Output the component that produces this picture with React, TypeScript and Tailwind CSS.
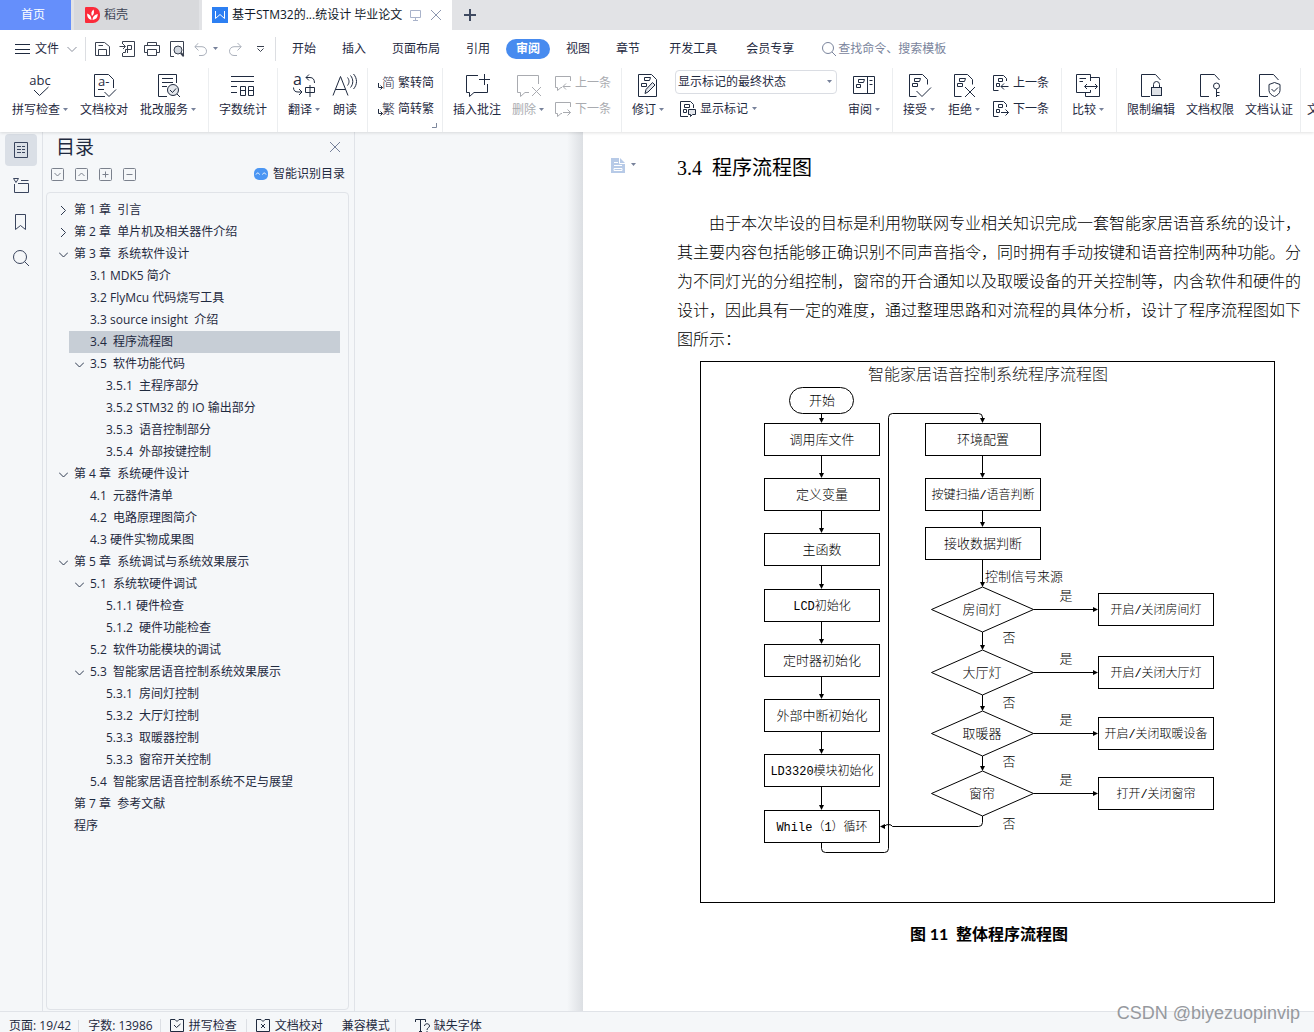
import React, { useState } from 'react';
import clsx from 'clsx';

interface TreeItem {
  label: string;
  level: 0 | 1 | 2;
  state?: 'open' | 'closed';
}

const tree: TreeItem[] = [
  { label: '第 1 章  引言', level: 0, state: 'closed' },
  { label: '第 2 章  单片机及相关器件介绍', level: 0, state: 'closed' },
  { label: '第 3 章  系统软件设计', level: 0, state: 'open' },
  { label: '3.1 MDK5 简介', level: 1 },
  { label: '3.2 FlyMcu 代码烧写工具', level: 1 },
  { label: '3.3 source insight  介绍', level: 1 },
  { label: '3.4  程序流程图', level: 1 },
  { label: '3.5  软件功能代码', level: 1, state: 'open' },
  { label: '3.5.1  主程序部分', level: 2 },
  { label: '3.5.2 STM32 的 IO 输出部分', level: 2 },
  { label: '3.5.3  语音控制部分', level: 2 },
  { label: '3.5.4  外部按键控制', level: 2 },
  { label: '第 4 章  系统硬件设计', level: 0, state: 'open' },
  { label: '4.1  元器件清单', level: 1 },
  { label: '4.2  电路原理图简介', level: 1 },
  { label: '4.3 硬件实物成果图', level: 1 },
  { label: '第 5 章  系统调试与系统效果展示', level: 0, state: 'open' },
  { label: '5.1  系统软硬件调试', level: 1, state: 'open' },
  { label: '5.1.1 硬件检查', level: 2 },
  { label: '5.1.2  硬件功能检查', level: 2 },
  { label: '5.2  软件功能模块的调试', level: 1 },
  { label: '5.3  智能家居语音控制系统效果展示', level: 1, state: 'open' },
  { label: '5.3.1  房间灯控制', level: 2 },
  { label: '5.3.2  大厅灯控制', level: 2 },
  { label: '5.3.3  取暖器控制', level: 2 },
  { label: '5.3.3  窗帘开关控制', level: 2 },
  { label: '5.4  智能家居语音控制系统不足与展望', level: 1 },
  { label: '第 7 章  参考文献', level: 0 },
  { label: '程序', level: 0 },
];

const levelMargin = ['ml-[6px]', 'ml-[22px]', 'ml-[38px]'];

/* ---------- small helpers ---------- */

const Caret = () => (
  <svg className="w-[5px] h-[3px] mb-[2px] shrink-0" viewBox="0 0 5 3">
    <path d="M0 0h5L2.5 3z" fill="#77819a" />
  </svg>
);

interface IconProps {
  children: React.ReactNode;
  className?: string;
}

// 24x26 ribbon icon, drawings may run a little over the sides
const Big = ({ children, className }: IconProps) => (
  <svg className={clsx('w-6 h-[26px] overflow-visible shrink-0', className)} viewBox="2 0 24 26" fill="none" stroke="currentColor">
    {children}
  </svg>
);

const Small = ({ children, className }: IconProps) => (
  <svg className={clsx('w-4 h-4 overflow-visible shrink-0', className)} viewBox="0 0 16 16" fill="none" stroke="currentColor">
    {children}
  </svg>
);

interface ButtonProps {
  label: string;
  icon: React.ReactNode;
  caret?: boolean;
  disabled?: boolean;
}

const BigButton = ({ label, icon, caret, disabled }: ButtonProps) => (
  <button disabled={disabled} className={clsx('flex flex-col items-center gap-1 shrink-0 whitespace-nowrap', disabled && 'text-[#a9abb0]')}>
    {icon}
    <span className="flex items-center gap-[3px] leading-4">
      {label}
      {caret && <Caret />}
    </span>
  </button>
);

const SmallButton = ({ label, icon, caret, disabled }: ButtonProps) => (
  <button disabled={disabled} className={clsx('flex items-center gap-1 h-[26px] shrink-0 whitespace-nowrap', disabled && 'text-[#a9abb0]')}>
    {icon}
    {label}
    {caret && <Caret />}
  </button>
);

const Group = ({ children, className }: IconProps) => (
  <div className={clsx('relative flex items-start shrink-0 pt-1 px-[10px] border-r border-[#eceef0]', className)}>{children}</div>
);

// two small buttons one over the other
const Stack = ({ children }: { children: React.ReactNode }) => <div className="flex flex-col -mt-[2px]">{children}</div>;

/* ---------- ribbon drawings ---------- */

const DocMarks = () => (
  <>
    <path d="M11.500 24.500H4.500V2.500H17.500L22.500 7.500V12.500" />
    <path d="M9.500 6.500h6l-1 3h-5zM7.500 11.500h5v3h-5z" />
  </>
);

const PlainDoc = () => <path d="M13 24.500H4.500V2.500H18.500L23.500 8" />;

const SmallDoc = () => (
  <>
    <path d="M5.500 15.500H.5V.5H10.500L13.500 3.500V6" />
    <path d="M5.500 3.500h4v3h-4zM3.500 8.500h3v3h-3z" />
  </>
);

const SmallBubble = () => <path d="M15.500 6V1.500H.5V12.500H2.500V15.500L6 12.500H7" />;

const ArrowLeft = () => <path d="M15.500 11.500H8M11 8.500L8 11.500 11 14.500" />;
const ArrowRight = () => <path d="M8 11.500H15.500M12.500 8.500L15.500 11.500 12.500 14.500" />;

const ConvertIcon = ({ char }: { char: string }) => (
  <Small>
    <text x="4" y="12" fill="currentColor" stroke="none" className="text-[13px] font-light">{char}</text>
    <path d="M.5 8V12.500H4.500M2.500 10.500L4.500 12.500 2.500 14.500" />
  </Small>
);

function TabStrip() {
  return (
    <div className="flex h-[30px] bg-[#e2e3e6] shrink-0">
      <button className="w-[71px] bg-[#658ffb] text-white pr-[5px] mr-[3px]">首页</button>
      <button className="flex items-center w-[125px] mr-[3px] pl-[11px] gap-1 bg-[#d8d9dc] text-[#3d4455]">
        <svg className="w-[15px] h-4" viewBox="0 0 15 16">
          <path d="M1 0h7a7 7 0 0 1 7 7v2a7 7 0 0 1-7 7H1a1 1 0 0 1-1-1V1a1 1 0 0 1 1-1z" fill="#fb2b3a" />
          <path d="M6.500 13C3 12 2 9.500 2.200 6.500 5 7.500 6.500 9.500 6.500 13zM7 9C5.800 6.500 6.300 4.500 8.500 2.500 9.500 5 9 7.500 7 9zM7.500 13C7.500 9.500 9.500 7.500 12.800 7 12.800 10.500 11 12.500 7.500 13z" fill="#fff" />
        </svg>
        稻壳
      </button>
      <div className="flex items-center w-[250px] bg-white pl-[10px] text-[#101828]">
        <svg className="w-4 h-4 mr-1" viewBox="0 0 16 16">
          <rect width="16" height="16" fill="#2d7ff2" />
          <path d="M3.500 4v7.500L8 7.500l4.500 4V4" stroke="#fff" fill="none" />
        </svg>
        <span className="flex-1 whitespace-nowrap">基于STM32的...统设计 毕业论文</span>
        <button aria-label="演示" className="mr-[10px]">
          <svg className="w-[11px] h-[11px]" viewBox="0 0 11 11" fill="none" stroke="#a9b3ca">
            <path d="M.5.5h10v7H.5zM5.500 8v2.500M3 10.500h5" />
          </svg>
        </button>
        <button aria-label="关闭标签" className="mr-[11px]">
          <svg className="w-[10px] h-[10px]" viewBox="0 0 10 10" fill="none" stroke="#8c97af">
            <path d="M0 0l10 10M10 0L0 10" />
          </svg>
        </button>
      </div>
      <button aria-label="新建标签" className="pl-3">
        <svg className="w-3 h-3" viewBox="0 0 12 12" stroke="#3f4a60" strokeWidth="2">
          <path d="M6 0v12M0 6h12" />
        </svg>
      </button>
    </div>
  );
}

function MenuBar() {
  const [tab, setTab] = useState('审阅');

  const renderTab = (name: string) => (
    <button
      key={name}
      onClick={() => setTab(name)}
      className={clsx('h-5 px-[10px] rounded-full whitespace-nowrap', tab === name && 'bg-[#478bef] text-white font-bold')}
    >
      {name}
    </button>
  );

  return (
    <div className="flex items-center h-[38px] shrink-0">
      <button className="flex items-center pl-[15px] pr-2">
        <svg className="w-[15px] h-[10px] mr-[5px]" viewBox="0 0 15 10" stroke="currentColor">
          <path d="M0 .5h15M0 5.500h15M0 9.500h15" />
        </svg>
        文件
        <svg className="w-[10px] h-[5px] ml-2" viewBox="0 0 10 5" fill="none" stroke="#8a8f9c">
          <path d="M.5 0L5 4.500 9.500 0" />
        </svg>
      </button>
      <div className="flex items-center h-6 border-x border-[#dcdee2] pl-2 w-[191px] text-[#39404f]">
        <button aria-label="保存" className="mr-[9px]">
          <Small>
            <path d="M1.500 1.500H10.500L15.500 5.500V14.500H1.500zM4.500 14.500V8.500H12.500V14.500M4.500 4.500H9" />
          </Small>
        </button>
        <button aria-label="输出为PDF" className="mr-[9px]">
          <Small>
            <path d="M3.500 3V.5H15.500V15.500H3.500V12M.5 5.500H6M4 3L6.500 5.500 4 8M8.500 12V4.500H12.500V8.500H6.500V11.500H4" />
          </Small>
        </button>
        <button aria-label="打印" className="mr-[9px]">
          <Small>
            <path d="M3.500 4.500V1.500H12.500V4.500M3.500 11.500H.5V4.500H15.500V11.500H12.500M3.500 8.500H12.500V14.500H3.500z" />
          </Small>
        </button>
        <button aria-label="打印预览" className="mr-[9px]">
          <Small>
            <path d="M5 15.500H1.500V.5H14.500V15.500" />
            <circle cx="9" cy="9" r="4" fill="#d3d8e0" />
            <path d="M12 12l2.500 3" strokeWidth="2" />
          </Small>
        </button>
        <button aria-label="撤销" className="mr-[6px] text-[#aab0bb]">
          <svg className="w-[13px] h-[13px]" viewBox="0 0 13 13" fill="none" stroke="currentColor">
            <path d="M4.500 0L.8 3.700 4.500 7.500M1 3.700H8C14 4 14 12.500 8 12.500H5" />
          </svg>
        </button>
        <Caret />
        <button aria-label="恢复" className="ml-[11px] mr-[14px] text-[#aab0bb]">
          <svg className="w-[13px] h-[13px]" viewBox="0 0 13 13" fill="none" stroke="currentColor">
            <path d="M8.500 0L12.200 3.700 8.500 7.500M12 3.700H5C-1 4-1 12.500 5 12.500H8" />
          </svg>
        </button>
        <button aria-label="自定义快速访问工具栏">
          <svg className="w-[9px] h-[7px]" viewBox="0 0 9 7" fill="none" stroke="currentColor">
            <path d="M1 .5h7M1.500 2.500L4.500 5.500 7.500 2.500" />
          </svg>
        </button>
      </div>
      <nav className="flex items-center gap-[6px] pl-[6px]">{['开始', '插入', '页面布局', '引用', '审阅', '视图', '章节'].map(renderTab)}</nav>
      <nav className="flex items-center gap-[9px] pl-[9px]">{['开发工具', '会员专享'].map(renderTab)}</nav>
      <label className="flex items-center pl-[18px] text-[#7a849c]">
        <svg className="w-[14px] h-[14px] mr-[2px] shrink-0" viewBox="0 0 14 14" fill="none" stroke="currentColor">
          <circle cx="6" cy="6" r="5.500" />
          <path d="M10 10l4 4" />
        </svg>
        <input type="text" placeholder="查找命令、搜索模板" className="w-[130px] outline-none placeholder:text-[#7a849c]" />
      </label>
    </div>
  );
}

function Ribbon() {
  return (
    <div className="flex h-16 shrink-0 overflow-hidden">
      <Group className="w-[209px] pl-3 gap-3">
        <BigButton
          caret
          label="拼写检查"
          icon={
            <Big>
              <text x="14" y="13" textAnchor="middle" fill="currentColor" stroke="none" className="text-[13px]">abc</text>
              <path d="M8 18l5.500 5.500L22.500 15" />
            </Big>
          }
        />
        <BigButton
          label="文档校对"
          icon={
            <Big>
              <path d="M15 24.500H4.500V2.500H18.500L23.500 7.500V16M8 17.500H14M14.500 20L19 24.500 26 17.500" />
              <text x="8" y="14" fill="currentColor" stroke="none" className="text-[13px]">a-</text>
            </Big>
          }
        />
        <BigButton
          caret
          label="批改服务"
          icon={
            <Big>
              <path d="M13 24.500H4.500V2.500H22.500V11M8 6.500H19M8 10.500H19M8 14.500H13" />
              <circle cx="19" cy="18" r="5.500" fill="#e4e7ec" />
              <path d="M16 18l2.500 2.500L22 16.500M23 22l3 3" />
            </Big>
          }
        />
      </Group>
      <Group className="w-[69px]">
        <BigButton
          label="字数统计"
          icon={
            <Big>
              <path d="M2 4.500H25M2 9.500H25M2 14.500H8M2 20.500H8M11.500 14.500h5v9h-5zM11.500 18.500h5M19.500 14.500h5v9h-5zM19.500 18.500h5" />
            </Big>
          }
        />
      </Group>
      <Group className="w-[90px] gap-[13px]">
        <BigButton
          caret
          label="翻译"
          icon={
            <Big>
              <text x="3" y="13" fill="currentColor" stroke="none" className="text-[16px]">a</text>
              <path d="M19 2.500L16 5.500 19 8.500M16 5.500H20C23 5.500 24.500 7.500 24.500 11M9 17l3 3-3 3M12 20H8C5 20 3.500 18.500 3.500 15.500M15.500 15.500h9v5h-9zM20 13v12" />
            </Big>
          }
        />
        <BigButton
          label="朗读"
          icon={
            <Big>
              <path d="M2 23.500L9.500 4.500 17 23.500M4.500 17.500H14.500M16.500 5.500C18.500 8 18.500 11 16.500 13.500M19.500 3.500C22.500 7 22.500 12 19.500 15.500M22.500 2C26.500 6.500 26.500 12.500 22.500 17" />
            </Big>
          }
        />
      </Group>
      <Group className="w-[75px] px-[9px]">
        <Stack>
          <SmallButton label="繁转简" icon={<ConvertIcon char="简" />} />
          <SmallButton label="简转繁" icon={<ConvertIcon char="繁" />} />
        </Stack>
        <svg className="absolute right-[5px] bottom-1 w-[5px] h-[5px]" viewBox="0 0 5 5" fill="none" stroke="#7d879c">
          <path d="M4.500 0V4.500H0" />
        </svg>
      </Group>
      <Group className="w-[179px] gap-[11px]">
        <BigButton
          label="插入批注"
          icon={
            <Big>
              <path d="M15 3.500H3.500V20.500H6.500V24.500L11 20.500H24.500V12M21.500 2V13M16 7.500H27" />
            </Big>
          }
        />
        <BigButton
          caret
          disabled
          label="删除"
          icon={
            <Big>
              <path d="M24.500 12V3.500H3.500V20.500H6.500V24.500L11 20.500H15M18 15l9 9M27 15l-9 9" />
            </Big>
          }
        />
        <Stack>
          <SmallButton disabled label="上一条" icon={<Small><SmallBubble /><ArrowLeft /></Small>} />
          <SmallButton disabled label="下一条" icon={<Small><SmallBubble /><ArrowRight /></Small>} />
        </Stack>
      </Group>
      <Group className="w-[271px] justify-between pr-3">
        <BigButton
          caret
          label="修订"
          icon={
            <Big>
              <path d="M4.500 2.500H17.500L22.500 7.500V24.500H4.500zM10.500 5.500h6l-1 3h-5zM7.500 11.500h5v3h-5z" />
              <path d="M11 21.500l1-4L18.500 10.500l2.500 2.500-7 7z" fill="#e4e7ec" />
            </Big>
          }
        />
        <div className="flex flex-col gap-[2px] -mt-[2px]">
          <div className="relative flex items-center">
            <select aria-label="显示方式" className="w-[162px] h-6 border border-[#dadde3] rounded-sm pl-[2px] appearance-none bg-white outline-none">
              <option>显示标记的最终状态</option>
            </select>
            <span className="absolute right-[5px] pointer-events-none"><Caret /></span>
          </div>
          <div className="pl-[5px]">
            <SmallButton
              caret
              label="显示标记"
              icon={
                <Small>
                  <path d="M8 15.500H.5V.5H10.500L13.500 3.500V7M4.500 3.500h5v3h-5zM3.500 8.500h3v3h-3z" />
                  <path d="M8.500 8.500h7v5h-3l-2 2v-2h-2z" fill="#e4e7ec" />
                </Small>
              }
            />
          </div>
        </div>
        <BigButton
          caret
          label="审阅"
          icon={
            <Big>
              <path d="M3.500 4.500H24.500V21.500H3.500zM17.500 4.500V21.500M8.500 7.500h6l-1 3h-5zM6.500 12.500h4v3h-4zM19.500 8.500h3M19.500 12.500h3" />
            </Big>
          }
        />
      </Group>
      <Group className="w-[169px] gap-[13px]">
        <BigButton caret label="接受" icon={<Big><DocMarks /><path d="M11.500 19L17 24.500 26 15.500" /></Big>} />
        <BigButton caret label="拒绝" icon={<Big><DocMarks /><path d="M15 15l10 10M25 15L15 25" /></Big>} />
        <Stack>
          <SmallButton label="上一条" icon={<Small><SmallDoc /><ArrowLeft /></Small>} />
          <SmallButton label="下一条" icon={<Small><SmallDoc /><ArrowRight /></Small>} />
        </Stack>
      </Group>
      <Group className="w-[55px]">
        <BigButton
          caret
          label="比较"
          icon={
            <Big>
              <path d="M16.500 9V2.500H2.500V20.500H16.500V18M5.500 6.500H12M5.500 9.500H9M16.500 5.500H25.500V24.500H11.500V21M11 14.500H23M13 12L10.500 14.500 13 17M21 12L23.500 14.500 21 17" />
            </Big>
          }
        />
      </Group>
      <Group className="w-[184px] gap-[11px]">
        <BigButton
          label="限制编辑"
          icon={
            <Big>
              <PlainDoc />
              <rect x="14.500" y="15.500" width="10" height="8" fill="#dfe2e7" />
              <path d="M16.500 15V12.500a3 3 0 0 1 6 0V15" />
            </Big>
          }
        />
        <BigButton
          label="文档权限"
          icon={
            <Big>
              <PlainDoc />
              <circle cx="20.500" cy="14" r="3" />
              <path d="M20.500 17V25M20.500 20.500h3M20.500 23.500h3" />
            </Big>
          }
        />
        <BigButton
          label="文档认证"
          icon={
            <Big>
              <PlainDoc />
              <path d="M19.500 10.500L25 12.500V18.500C25 21.500 22 23.500 19.500 24.500 17 23.500 14 21.500 14 18.500V12.500z" />
              <path d="M16.500 17l2.500 2.500 4-4" />
            </Big>
          }
        />
      </Group>
      <div className="pl-[6px] pt-[34px] whitespace-nowrap leading-4">文</div>
    </div>
  );
}

function Rail() {
  return (
    <nav className="flex flex-col gap-1 w-[43px] shrink-0 pl-[5px] pt-[2px] border-r border-[#e0e3e8] text-[#3a455e]">
      <button aria-label="目录" className="flex items-center justify-center w-8 h-8 rounded-sm bg-[#dadfe6]">
        <Small>
          <path d="M1.500.5h13v15h-13zM4 4.500h4M4 7.500h4M4 10.500h4M9 4.500h3M9 7.500h3M9 10.500h3" />
        </Small>
      </button>
      <button aria-label="章节" className="flex items-center justify-center w-8 h-8">
        <Small>
          <path d="M.5.500h5L3 4.500zM8 2.500h7.500M1.500 6V14.500H15.500V5.500H5" />
        </Small>
      </button>
      <button aria-label="书签" className="flex items-center justify-center w-8 h-8">
        <Small>
          <path d="M2.500.5h10v15l-5-4-5 4z" />
        </Small>
      </button>
      <button aria-label="查找" className="flex items-center justify-center w-8 h-8">
        <Small>
          <circle cx="7" cy="7" r="6.500" />
          <path d="M11.500 11.500L16 16" />
        </Small>
      </button>
    </nav>
  );
}

const treeTools = [
  { name: '展开', d: 'M3.500 5l3 3 3-3' },
  { name: '折叠', d: 'M3.500 8l3-3 3 3' },
  { name: '升级', d: 'M3.500 6.500h6M6.500 3.500v6' },
  { name: '降级', d: 'M3.500 6.500h6' },
];

function OutlinePanel() {
  const [selected, setSelected] = useState(6);

  return (
    <aside className="flex flex-col w-[312px] shrink-0 border-r border-[#e0e3e8] pl-[3px] pr-[5px]">
      <div className="flex items-center justify-between h-[30px] pl-[10px] pr-[9px]">
        <h2 className="text-[19px]">目录</h2>
        <button aria-label="关闭">
          <svg className="w-[10px] h-[10px]" viewBox="0 0 10 10" stroke="#76819a">
            <path d="M0 0l10 10M10 0L0 10" />
          </svg>
        </button>
      </div>
      <div className="flex items-center h-6 pl-[5px] pr-1 gap-[11px]">
        {treeTools.map(tool => (
          <button key={tool.name} aria-label={tool.name}>
            <svg className="w-[13px] h-[13px]" viewBox="0 0 13 13" fill="none" stroke="#7b818d">
              <rect x=".5" y=".5" width="12" height="12" rx="1" />
              <path d={tool.d} />
            </svg>
          </button>
        ))}
        <button className="flex items-center gap-[5px] ml-auto">
          <svg className="w-[14px] h-3" viewBox="0 0 14 12">
            <rect width="14" height="12" rx="5" fill="#4b96f3" />
            <path d="M2 6.500c1-2 2.500-2 3.500 0M8.500 6.500c1-2 2.500-2 3.500 0" stroke="#fff" fill="none" />
          </svg>
          智能识别目录
        </button>
      </div>
      <ul className="flex-1 min-h-0 mt-[6px] mb-px pt-[6px] border border-[#e0e3e8] rounded-sm overflow-hidden">
        {tree.map((item, index) => (
          <li key={index} className={clsx('mr-2', levelMargin[item.level])}>
            <button
              onClick={() => setSelected(index)}
              className={clsx('flex items-center w-full h-[22px] pl-[6px] text-left whitespace-pre', index === selected && 'bg-[#c7ced6]')}
            >
              <svg className="w-[9px] h-[9px] mr-[6px] shrink-0" viewBox="0 0 9 9" fill="none" stroke="#2f3a50">
                {item.state === 'open' && <path d="M0 2.500l4.500 4.500L9 2.500" />}
                {item.state === 'closed' && <path d="M2 0l4.500 4.500L2 9" />}
              </svg>
              {item.label}
            </button>
          </li>
        ))}
      </ul>
    </aside>
  );
}

/* ---------- flow chart ---------- */

const mainSteps = [
  { text: '调用库文件', y: 62 },
  { text: '定义变量', y: 117 },
  { text: '主函数', y: 172 },
  { text: 'LCD初始化', y: 228 },
  { text: '定时器初始化', y: 283 },
  { text: '外部中断初始化', y: 338 },
  { text: 'LD3320模块初始化', y: 393 },
  { text: 'While（1）循环', y: 449 },
];

const scanSteps = [
  { text: '环境配置', y: 62 },
  { text: '按键扫描/语音判断', y: 117 },
  { text: '接收数据判断', y: 166 },
];

const decisions = [
  { text: '房间灯', action: '开启/关闭房间灯', y: 248, noY: 276 },
  { text: '大厅灯', action: '开启/关闭大厅灯', y: 311, noY: 341 },
  { text: '取暖器', action: '开启/关闭取暖设备', y: 372, noY: 400 },
  { text: '窗帘', action: '打开/关闭窗帘', y: 432, noY: 462 },
];

interface StepProps {
  x: number;
  y: number;
  text: string;
}

// labels with latin letters or a slash are set one size smaller to stay inside the box
const ChartText = ({ x, y, text }: StepProps) => (
  <text
    x={x}
    y={y + 5}
    textAnchor="middle"
    fill="#000"
    stroke="none"
    className={/[A-Z/]/.test(text) ? 'text-[12px]' : 'text-[13px]'}
  >
    {text}
  </text>
);

// 115x33 process box, x is its left edge
const Step = ({ x, y, text }: StepProps) => (
  <>
    <rect x={x + 0.5} y={y + 0.5} width="115" height="32" />
    <ChartText x={x + 58} y={y + 16} text={text} />
  </>
);

const ArrowDown = ({ x, from, to }: { x: number; from: number; to: number }) => (
  <>
    <path d={`M${x} ${from}V${to - 3}`} />
    <path d={`M${x - 2.5} ${to - 5}h5l-2.5 5z`} fill="#000" stroke="none" />
  </>
);

function FlowChart() {
  return (
    <svg
      className='block w-[575px] h-[542px] shrink-0 font-["Liberation_Mono","Noto_Sans_CJK_SC",monospace] font-light'
      viewBox="0 0 575 542"
      fill="none"
      stroke="#000"
      role="img"
      aria-label="智能家居语音控制系统程序流程图"
    >
      <rect x=".5" y=".5" width="574" height="541" />
      <text x="288" y="19" textAnchor="middle" fill="#222" stroke="none" className="text-[16px]">智能家居语音控制系统程序流程图</text>

      <rect x="89.5" y="26.5" width="64" height="26" rx="13" />
      <ChartText x={122} y={39} text="开始" />
      <ArrowDown x={121.5} from={53} to={62} />
      {mainSteps.map((step, i) => (
        <React.Fragment key={step.text}>
          <Step x={64} y={step.y} text={step.text} />
          {i > 0 && <ArrowDown x={121.5} from={mainSteps[i - 1].y + 33} to={step.y} />}
        </React.Fragment>
      ))}

      {/* from the loop box up to the second column */}
      <path d="M121.500 482V487.500q0 4 4 4H184.500q4 0 4-4V56.500q0-4 4-4H278.500q4 0 4 4" />
      <ArrowDown x={282.5} from={56} to={62} />

      {scanSteps.map((step, i) => (
        <React.Fragment key={step.text}>
          <Step x={225} y={step.y} text={step.text} />
          {i > 0 && <ArrowDown x={282.5} from={scanSteps[i - 1].y + 33} to={step.y} />}
        </React.Fragment>
      ))}
      <ArrowDown x={282.5} from={199} to={226} />
      <ChartText x={324} y={215} text="控制信号来源" />

      {decisions.map((item, i) => (
        <React.Fragment key={item.text}>
          <path d={`M231.5 ${item.y + 0.5}l51-22.5 51 22.5-51 22.5zM333.5 ${item.y + 0.5}H395`} />
          <path d={`M393 ${item.y - 2}v5l5-2.5z`} fill="#000" stroke="none" />
          <ChartText x={282} y={item.y} text={item.text} />
          <ChartText x={366} y={item.y - 14} text="是" />
          <ChartText x={309} y={item.noY} text="否" />
          <Step x={398} y={item.y - 16} text={item.action} />
          {i > 0 && <ArrowDown x={282.5} from={decisions[i - 1].y + 23} to={item.y - 22} />}
        </React.Fragment>
      ))}

      {/* back to the loop box, hopping over the other line */}
      <path d="M282.500 455V461.500q0 4-4 4H192.500q-1-2-4-2t-4 2H183" />
      <path d="M185 463v5l-5-2.500z" fill="#000" stroke="none" />
    </svg>
  );
}

function DocumentPage() {
  return (
    <article className='flex flex-1 min-w-0 bg-white text-black font-["Liberation_Serif","Noto_Sans_CJK_SC",serif]'>
      <div className="w-[94px] shrink-0 pl-7 pt-[26px]">
        <button aria-label="段落选项" className="flex items-center gap-[6px]">
          <svg className="w-[14px] h-[15px]" viewBox="0 0 14 15">
            <path d="M0 0h9l5 5v10H0z" fill="#b7cae7" />
            <path d="M8.500 0v5.500H14M3 4.500h4M3 7.500h8M3 10.500h8v2H3z" stroke="#fff" fill="none" />
          </svg>
          <Caret />
        </button>
      </div>
      <div className="flex-1 min-w-0 max-w-[624px] pt-[22px]">
        <h1 className="text-[20px] leading-7 whitespace-pre">3.4  程序流程图</h1>
        <p className="mt-[27px] text-[16px] leading-[29px] indent-8 font-light">
          由于本次毕设的目标是利用物联网专业相关知识完成一套智能家居语音系统的设计，其主要内容包括能够正确识别不同声音指令，同时拥有手动按键和语音控制两种功能。分为不同灯光的分组控制，窗帘的开合通知以及取暖设备的开关控制等，内含软件和硬件的设计，因此具有一定的难度，通过整理思路和对流程的具体分析，设计了程序流程图如下图所示：
        </p>
        <figure className="mt-[7px]">
          <div className="pl-[23px]">
            <FlowChart />
          </div>
          <figcaption className='mt-[19px] text-center text-[16px] leading-6 font-bold whitespace-pre font-["Lato","Noto_Sans_CJK_SC",sans-serif]'>图 11  整体程序流程图</figcaption>
        </figure>
      </div>
    </article>
  );
}

function StatusBar() {
  return (
    <footer className="flex items-end h-[21px] shrink-0 border-t border-[#e0e3e8] leading-3 whitespace-nowrap">
      <span className="pl-[9px] pr-[7px]">页面: 19/42</span>
      <span className="border-l border-[#dcdfe4] pl-[9px] pr-[7px]">字数: 13986</span>
      <button className="flex items-end border-l border-[#dcdfe4] pl-[9px] gap-[5px] pr-[9px]">
        <svg className="w-[14px] h-[13px]" viewBox="0 0 14 13" fill="none" stroke="currentColor">
          <path d="M5 .5H.5v12h13V.5H9M5 .5L7 2.500 9 .5M4 6l2.500 2.500L10.500 5" />
        </svg>
        拼写检查
      </button>
      <button className="flex items-end border-l border-[#dcdfe4] pl-[9px] gap-[5px]">
        <svg className="w-[14px] h-[13px]" viewBox="0 0 14 13" fill="none" stroke="currentColor">
          <path d="M5 .5H.5v12h13V.5H9M5 .5L7 2.500 9 .5M5 5l4 4M9 5L5 9" />
        </svg>
        文档校对
      </button>
      <button className="pl-[19px] pr-[5px]">兼容模式</button>
      <button className="flex items-end border-l border-[#dcdfe4] pl-[19px] gap-1">
        <svg className="w-[15px] h-[13px]" viewBox="0 0 15 13" fill="none" stroke="currentColor">
          <path d="M.5 3V.5H10.500V3M5.500.5V12.500M4 12.500h3M9.500 7c0-3 5-3 5 0 0 2-2.500 1.500-2.500 4M12 12v1" />
        </svg>
        缺失字体
      </button>
    </footer>
  );
}

export default function App() {
  return (
    <div className='relative flex flex-col h-screen overflow-hidden bg-[#f5f7f9] text-[12px] text-[#1f2a3f] font-["Open_Sans","Noto_Sans_CJK_SC",sans-serif]'>
      <header className="bg-white shrink-0 shadow-[0_1px_3px_rgba(0,0,0,0.12)] z-10">
        <TabStrip />
        <MenuBar />
        <Ribbon />
      </header>
      <main className="flex flex-1 min-h-0 overflow-hidden">
        <Rail />
        <OutlinePanel />
        <div className="flex justify-end w-[228px] shrink-0">
          <div className="w-4 bg-gradient-to-r from-[#f5f7f9] to-[#dcdfe3]" />
        </div>
        <DocumentPage />
      </main>
      <StatusBar />
      <div className='absolute right-[14px] bottom-[9px] text-[18px] leading-5 text-[#96999e] font-["Liberation_Sans",sans-serif] pointer-events-none'>CSDN @biyezuopinvip</div>
    </div>
  );
}
